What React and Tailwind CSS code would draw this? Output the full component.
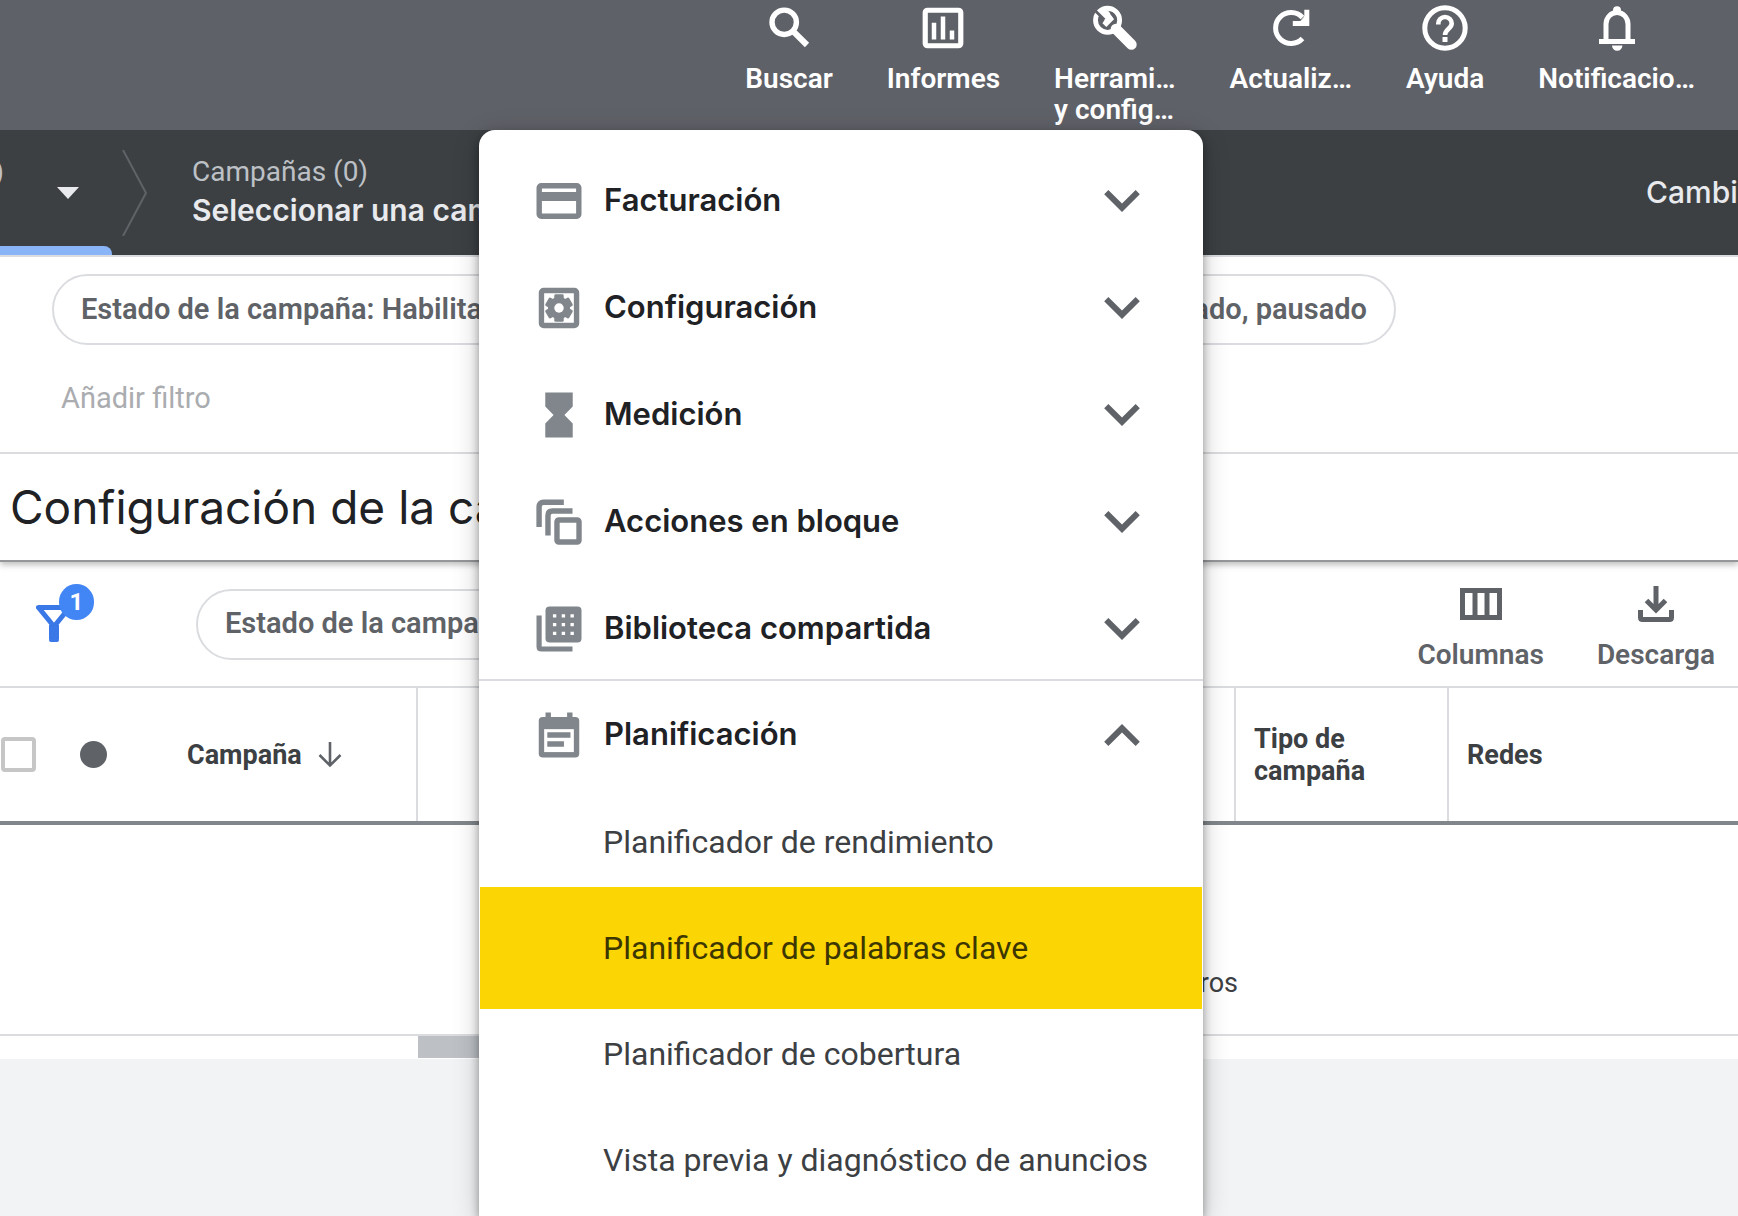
import React, { useState } from 'react';

const SearchIcon = ({ className }) => (
    <svg viewBox="0 0 54 54" className={className} fill="none" stroke="currentColor" strokeWidth="5.4">
        <circle cx="22.2" cy="21.3" r="12.2" />
        <path d="M30.500 29.600L45 44" strokeWidth="6" />
    </svg>
);

const ReportsIcon = ({ className }) => (
    <svg viewBox="0 0 24 24" className={className} fill="currentColor">
        <rect x="4.1" y="4.1" width="15.8" height="15.8" rx="1" fill="none" stroke="currentColor" strokeWidth="2.3" />
        <path d="M7 9.7h2v7.4H7zM11 6.9h2v10.2h-2zM15 13.1h2v4h-2z" />
    </svg>
);

const ToolsIcon = ({ className }) => (
    <svg viewBox="0 0 56 56" className={className} fill="none">
        <path d="M29 29L45 45" stroke="white" strokeWidth="11" strokeLinecap="round" />
        <circle cx="20.3" cy="20" r="12.5" stroke="white" strokeWidth="5" />
        <path d="M13 8l8 2 2 3 4 6-8 8-4-4 2-3-7-7z" fill="white" />
        <path d="M6.5 9L17 19.5M24 12.5l4 4" stroke="#5f6168" strokeWidth="3" />
    </svg>
);

const RefreshIcon = ({ className }) => (
    <svg viewBox="0 0 54 54" className={className} fill="none" stroke="currentColor" strokeWidth="5">
        <path d="M38.5 37.5A15.5 15.5 0 1 1 38.5 16.5" />
        <path d="M42.8 8.7v13.8h-14" />
        <path d="M36 21l6-7v8z" fill="currentColor" strokeWidth="1" />
    </svg>
);

const HelpIcon = ({ className }) => (
    <svg viewBox="0 0 54 54" className={className} fill="none" stroke="currentColor">
        <circle cx="27" cy="27" r="20.2" strokeWidth="5" />
        <path d="M20.3 23.5v-1a6.7 6.5 0 0 1 13.4 0c0 5-6.7 5.5-6.7 11.5" strokeWidth="4.6" />
        <path d="M27 36v5" strokeWidth="5" />
    </svg>
);

const BellIcon = ({ className }) => (
    <svg viewBox="0 0 54 54" className={className} fill="none" stroke="currentColor" strokeWidth="5">
        <path d="M16 40V23a11 11.5 0 0 1 22 0v17" />
        <path d="M9 40.4h36" />
        <circle cx="27" cy="9.3" r="4" fill="currentColor" strokeWidth="0" />
        <path d="M22 44.500h10.400a5.2 5.2 0 0 1-10.400 0z" fill="currentColor" strokeWidth="0" />
    </svg>
);

const CardIcon = ({ className }) => (
    <svg viewBox="0 0 24 24" className={className} fill="none" stroke="currentColor">
        <rect x="3.2" y="5.2" width="17.6" height="13.6" rx="0.9" strokeWidth="2.4" />
        <path d="M3 10h18" strokeWidth="4.1" />
    </svg>
);

const SettingsIcon = ({ className }) => (
    <svg viewBox="0 0 24 24" className={className} fill="currentColor">
        <rect x="4.2" y="4.2" width="15.6" height="15.6" rx="1" fill="none" stroke="currentColor" strokeWidth="2.4" />
        <circle cx="12" cy="12" r="4.9" />
        <rect x="9.9" y="5.9" width="4.2" height="12.2" rx="0.6" />
        <rect x="9.9" y="5.9" width="4.2" height="12.2" rx="0.6" transform="rotate(60 12 12)" />
        <rect x="9.9" y="5.9" width="4.2" height="12.2" rx="0.6" transform="rotate(120 12 12)" />
        <circle cx="12" cy="12" r="2.1" fill="white" />
    </svg>
);

const HourglassIcon = ({ className }) => (
    <svg viewBox="0 0 24 24" className={className} fill="currentColor">
        <path d="M5.900 2h12.200v6.200L14.400 12l3.700 3.800V22H5.900v-6.200L9.600 12 5.900 8.200z" />
    </svg>
);

const BulkIcon = ({ className }) => (
    <svg viewBox="0 0 24 24" className={className} fill="none" stroke="currentColor" strokeWidth="2.4">
        <path d="M3.15 14.2V5.2q0-2 2-2h9" />
        <path d="M7.1 18V9.1q0-2 2-2H18" />
        <rect x="11.1" y="11.1" width="9.8" height="9.8" rx="0.8" />
    </svg>
);

const LibraryIcon = ({ className }) => (
    <svg viewBox="0 0 24 24" className={className} fill="currentColor">
        <path d="M3.15 6v13.9q0 1 1 1H18" fill="none" stroke="currentColor" strokeWidth="2.3" />
        <rect x="6" y="2" width="16" height="16" rx="1.8" />
        <path
            fill="white"
            d="M9.3 5.4h1.5v1.5H9.3zM13.2 5.4h1.5v1.5h-1.5zM17.1 5.4h1.5v1.5h-1.5zM9.3 9.3h1.5v1.5H9.3zM13.2 9.3h1.5v1.5h-1.5zM17.1 9.3h1.5v1.5h-1.5zM9.3 13.2h1.5v1.5H9.3zM13.2 13.2h1.5v1.5h-1.5zM17.1 13.2h1.5v1.5h-1.5z"
        />
    </svg>
);

const PlanningIcon = ({ className }) => (
    <svg viewBox="0 0 24 24" className={className} fill="currentColor">
        <path d="M6 2h2.4v3H6zM15.6 2H18v3h-2.4z" />
        <rect x="3" y="4" width="18" height="18" rx="1.8" />
        <path fill="white" d="M5.4 9.4h13.2v10.2H5.4z" />
        <path d="M6.8 10.8h10.3v2.4H6.8zM6.8 14.8h7.4v2.4H6.8z" />
    </svg>
);

const Chevron = ({ open }) => (
    <svg
        viewBox="6 8.59 12 7.41"
        className={open ? 'w-9 h-[22px] rotate-180' : 'w-9 h-[22px]'}
        fill="#5f6368"
    >
        <path d="M16.59 8.59L12 13.17 7.41 8.59 6 10l6 6 6-6z" />
    </svg>
);

const ColumnsIcon = () => (
    <svg viewBox="0 0 42 32" className="w-[42px] h-8" fill="none" stroke="#5f6368">
        <rect x="2.5" y="2.5" width="37" height="27" strokeWidth="5" />
        <path d="M15 3v26M27 3v26" strokeWidth="5" />
    </svg>
);

const DownloadIcon = () => (
    <svg viewBox="0 0 36 36" className="w-9 h-9" fill="none" stroke="#5f6368" strokeWidth="5">
        <path d="M18 0v24M8.5 14.5l9.5 9.5 9.5-9.5" />
        <path d="M2.5 24v7.5q0 2 2 2h27q2 0 2-2V24" />
    </svg>
);

const FunnelIcon = () => (
    <svg viewBox="0 0 36 37" className="w-9 h-[37px]" fill="none" stroke="#3b78e7" strokeLinejoin="round">
        <path d="M2.5 2.5h31L18 21.5z" strokeWidth="5" />
        <path d="M18 20v14" strokeWidth="10" />
        <path d="M15 35h6" strokeWidth="4" strokeLinecap="round" />
    </svg>
);

const TOOLS = [
    { icon: SearchIcon, lines: ['Buscar'] },
    { icon: ReportsIcon, lines: ['Informes'] },
    { icon: ToolsIcon, lines: ['Herrami…', 'y config…'] },
    { icon: RefreshIcon, lines: ['Actualiz…'] },
    { icon: HelpIcon, lines: ['Ayuda'] },
    { icon: BellIcon, lines: ['Notificacio…'] },
];

const SECTIONS = [
    { icon: CardIcon, label: 'Facturación' },
    { icon: SettingsIcon, label: 'Configuración' },
    { icon: HourglassIcon, label: 'Medición' },
    { icon: BulkIcon, label: 'Acciones en bloque' },
    { icon: LibraryIcon, label: 'Biblioteca compartida' },
];

const PLANNING_LINKS = [
    'Planificador de rendimiento',
    'Planificador de palabras clave',
    'Planificador de cobertura',
    'Vista previa y diagnóstico de anuncios',
];

const TABLE_ACTIONS = [
    { icon: ColumnsIcon, label: 'Columnas' },
    { icon: DownloadIcon, label: 'Descarga' },
];

const MenuRow = ({ icon: Icon, label, open, onClick }) => (
    <button
        type="button"
        onClick={onClick}
        aria-expanded={!!open}
        className="flex items-center w-full h-[107px] pl-[53px] pr-[63px] text-left"
    >
        <Icon className="w-[54px] h-[54px] shrink-0 text-[#80868b]" />
        <span className="flex-1 pl-[18px] font-['Inter'] text-[31px] font-semibold text-[#202124]">{label}</span>
        <Chevron open={open} />
    </button>
);

const ToolsMenu = () => {
    const [open, setOpen] = useState(true);

    return (
        <nav className="absolute top-[130px] bottom-0 right-[535px] w-[724px] pt-[17px] overflow-hidden rounded-t-2xl bg-white">
            {SECTIONS.map((section) => (
                <MenuRow key={section.label} icon={section.icon} label={section.label} />
            ))}
            <div className="-mt-[3px] border-t-2 border-[#dadce0]">
                <MenuRow icon={PlanningIcon} label="Planificación" open={open} onClick={() => setOpen(!open)} />
                {open && (
                    <ul className="px-px pt-px">
                        {PLANNING_LINKS.map((link, i) => (
                            <li key={link} className="flex items-center h-[106px]">
                                <a
                                    href="#"
                                    className={
                                        i === 1
                                            ? 'flex items-center w-full h-[122px] shrink-0 pl-[123px] bg-[#fcd504] text-[32px] text-[#3c3600]'
                                            : 'flex items-center w-full h-[106px] pl-[123px] text-[32px] text-[#3c4043]'
                                    }
                                >
                                    {link}
                                </a>
                            </li>
                        ))}
                    </ul>
                )}
            </div>
        </nav>
    );
};

const Pill = ({ children }) => (
    <button
        type="button"
        className="h-[71px] px-[27px] shrink-0 rounded-full border-2 border-[#dadce0] text-[29px] font-semibold text-[#5f6368] whitespace-nowrap"
    >
        {children}
    </button>
);

const App = () => {
    return (
        <div className="relative h-screen overflow-hidden bg-[#f1f3f4] font-['Roboto',sans-serif]">
            <header className="flex justify-end gap-[54px] h-[130px] pr-[43px] bg-[#5f6168] text-white">
                {TOOLS.map(({ icon: Icon, lines }) => (
                    <button key={lines[0]} type="button" className="flex flex-col items-center gap-2 pt-px">
                        <Icon className="w-[54px] h-[54px]" />
                        <span className="text-left text-[28px] leading-[31px] font-semibold">
                            {lines.map((line) => (
                                <span key={line} className="block">{line}</span>
                            ))}
                        </span>
                    </button>
                ))}
            </header>

            <div className="flex h-[127px] overflow-hidden bg-[#3c4043] border-b-2 border-[#dadce0]">
                <div className="flex flex-col justify-between w-28 shrink-0">
                    <button type="button" className="flex items-start justify-between pt-[26px] pr-[33px]">
                        <span className="w-1 flex justify-end overflow-hidden text-[28px] leading-8 text-[#bdc1c6]">)</span>
                        <svg viewBox="0 0 22 12" className="w-[22px] h-3 mt-[31px]" fill="#e8eaed">
                            <path d="M0 0h22L11 12z" />
                        </svg>
                    </button>
                    <div className="h-[9px] rounded-tr-lg bg-[#8ab4f8]" />
                </div>
                <svg viewBox="0 0 26 86" className="w-[26px] h-[86px] ml-2.5 mt-5 shrink-0" fill="none" stroke="#5f6368" strokeWidth="2">
                    <path d="M1 0l23 43L1 86" />
                </svg>
                <div className="ml-11 pt-[26px] whitespace-nowrap">
                    <div className="text-[28px] leading-8 text-[#bdc1c6]">Campañas (0)</div>
                    <div className="mt-1 font-['Inter'] text-[30px] leading-9 font-semibold text-[#e8eaed]">Seleccionar una campaña</div>
                </div>
                <button type="button" className="w-[92px] ml-auto self-center overflow-hidden whitespace-nowrap text-left font-['Inter'] text-[30px] font-medium text-[#e8eaed]">
                    Cambiar
                </button>
            </div>

            <main className="bg-white">
                <section className="h-[197px] pt-[17px] border-b-2 border-[#dadce0]">
                    <div className="flex justify-between pl-[52px] pr-[342px]">
                        <Pill>Estado de la campaña: Habilitado</Pill>
                        <Pill>Estado del grupo: Habilitado, pausado</Pill>
                    </div>
                    <input
                        type="text"
                        aria-label="Añadir filtro"
                        placeholder="Añadir filtro"
                        className="block w-80 h-10 mt-[34px] ml-[61px] text-[29px] placeholder:text-[#aaacaf] outline-none"
                    />
                </section>

                <section className="relative flex items-center h-[108px] pl-2.5 border-b-2 border-[#949699] shadow-[0_3px_6px_rgba(0,0,0,0.25)] [clip-path:inset(0_0_-12px_0)]">
                    <h1 className="font-['Inter'] text-[46px] text-[#202124]">Configuración de la campaña</h1>
                </section>

                <section className="flex h-[126px] border-b-2 border-[#dadce0]">
                    <button type="button" aria-label="Filtros" className="relative w-[60px] h-[70px] ml-9 mt-[22px]">
                        <span className="flex h-[70px] pt-[21px] items-start"><FunnelIcon /></span>
                        <span className="absolute top-0 right-[2px] w-[35px] h-9 rounded-full bg-[#4285f4] text-2xl leading-9 font-bold text-white text-center">
                            1
                        </span>
                    </button>
                    <div className="flex items-center ml-[100px]">
                        <Pill>Estado de la campaña: Todas</Pill>
                    </div>
                    <div className="flex items-start gap-[53px] ml-auto pr-[23px] pt-6">
                        {TABLE_ACTIONS.map(({ icon: Icon, label }) => (
                            <button
                                key={label}
                                type="button"
                                className="flex flex-col items-center text-[28px] leading-8 font-semibold text-[#5f6368]"
                            >
                                <span className="flex items-center h-9"><Icon /></span>
                                <span className="pt-[17px]">{label}</span>
                            </button>
                        ))}
                    </div>
                </section>

                <table className="w-full table-fixed border-collapse text-[27px] leading-8 text-[#3c4043]">
                    <thead>
                        <tr className="h-[135px] border-b-4 border-[#80868b] text-left">
                            <th className="w-[72px] p-0">
                                <input
                                    type="checkbox"
                                    aria-label="Seleccionar todo"
                                    className="block w-[35px] h-[35px] ml-px appearance-none rounded border-4 border-[#c6c6c6]"
                                />
                            </th>
                            <th className="w-[115px] p-0">
                                <span className="block w-[27px] h-[27px] ml-2 rounded-full bg-[#5f6368]" />
                            </th>
                            <th className="w-[230px] p-0 border-r-2 border-[#dadce0] font-bold">
                                <span className="flex items-center gap-4">
                                    Campaña
                                    <svg viewBox="0 0 24 26" className="w-6 h-[26px]" fill="none" stroke="#5f6368" strokeWidth="2.6">
                                        <path d="M12 0v24M1.5 13L12 23.5 22.5 13" />
                                    </svg>
                                </span>
                            </th>
                            <th className="p-0 border-r-2 border-[#dadce0]" />
                            <th className="w-[213px] p-0 pl-[18px] pr-20 border-r-2 border-[#dadce0] font-bold">Tipo de campaña</th>
                            <th className="w-[290px] p-0 pl-[18px] font-bold">Redes</th>
                        </tr>
                    </thead>
                    <tbody>
                        <tr className="h-[212px] border-b-2 border-[#dadce0]">
                            <td colSpan={6} className="p-0 pt-[106px] pr-[500px] text-right">
                                No hay campañas que coincidan con los filtros
                            </td>
                        </tr>
                    </tbody>
                </table>
                <div className="h-[23px] pl-[418px]">
                    <div className="w-[500px] h-[22px] bg-[#bdc1c6]" />
                </div>
            </main>

            {/* soft edge around the open menu */}
            <div className="absolute top-[130px] bottom-0 right-[535px] w-[724px] rounded-t-2xl shadow-[0_4px_10px_rgba(0,0,0,0.35),0_6px_28px_rgba(0,0,0,0.2)]" />
            <ToolsMenu />
        </div>
    );
};

export default App;
